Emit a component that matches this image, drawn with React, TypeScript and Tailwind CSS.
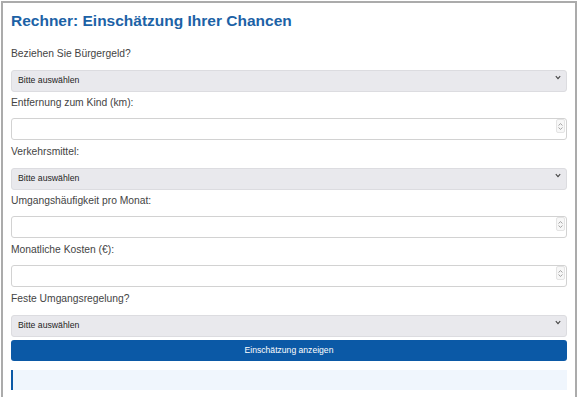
import React from 'react';

const font = "font-['Liberation_Sans',Arial,sans-serif]";

type Field = { label: string; kind: 'select' | 'number' };

const fields: Field[] = [
  { label: 'Beziehen Sie Bürgergeld?', kind: 'select' },
  { label: 'Entfernung zum Kind (km):', kind: 'number' },
  { label: 'Verkehrsmittel:', kind: 'select' },
  { label: 'Umgangshäufigkeit pro Monat:', kind: 'number' },
  { label: 'Monatliche Kosten (€):', kind: 'number' },
  { label: 'Feste Umgangsregelung?', kind: 'select' },
];

const SelectBox = () => (
  <div className="relative h-[22px] w-full">
    <select className="h-full w-full appearance-none rounded-[3px] border border-[#dcdce0] bg-[#e9e9ed] pl-[6px] text-[8.7px] text-[#1e1e1e] outline-none">
      <option>Bitte auswählen</option>
    </select>
    {/* chevron */}
    <svg
      className="pointer-events-none absolute right-[6px] top-[9px]"
      width="6"
      height="5"
      viewBox="0 0 6 5"
      fill="none"
      stroke="#444"
      strokeWidth="1.1"
    >
      <path d="M0.8 1.2 L3 3.6 L5.2 1.2" />
    </svg>
  </div>
);

const NumberBox = () => (
  <div className="relative h-[22px] w-full">
    <input
      type="text"
      className="h-full w-full rounded-[3px] border border-[#d2d2d2] bg-white px-[6px] text-[10px] outline-none"
    />
    {/* spinner */}
    <div className="pointer-events-none absolute right-[2px] top-[4px] flex h-[14px] w-[9px] flex-col items-center justify-center gap-[1px] rounded-[2px] border border-[#e4e4e4] bg-[#f7f7f7]">
      <svg width="5" height="3" viewBox="0 0 5 3" fill="none" stroke="#8f8f8f" strokeWidth="0.8">
        <path d="M0.5 2.5 L2.5 0.6 L4.5 2.5" />
      </svg>
      <svg width="5" height="3" viewBox="0 0 5 3" fill="none" stroke="#8f8f8f" strokeWidth="0.8">
        <path d="M0.5 0.5 L2.5 2.4 L4.5 0.5" />
      </svg>
    </div>
  </div>
);

export default function App() {
  return (
    <div className={`${font} min-h-[420px] w-[577px] bg-white`}>
      <div className="ml-px mt-px min-h-[420px] border-l-2 border-r-2 border-t-2 border-[#ababab] px-[8px] pt-[8px] pb-4">
        <h1 className="mb-[16px] text-[15.5px] font-bold leading-[20px] text-[#1c62a6]">
          Rechner: Einschätzung Ihrer Chancen
        </h1>

        <div className="flex flex-col gap-[8px]">
          {fields.map((f) => (
            <div key={f.label} className="flex flex-col gap-[5px]">
              <label className="text-[10.3px] leading-[14px] text-[#444]">{f.label}</label>
              {f.kind === 'select' ? <SelectBox /> : <NumberBox />}
            </div>
          ))}
        </div>

        <button className="mt-[7px] flex h-[20.5px] w-full items-center justify-center rounded-[3px] bg-[#0b59a6] text-[8.6px] text-white">
          Einschätzung anzeigen
        </button>

        <div className="mt-[9px] h-[20px] w-full border-l-2 border-[#0b59a6] bg-[#f0f6fd]"></div>
      </div>
    </div>
  );
}
